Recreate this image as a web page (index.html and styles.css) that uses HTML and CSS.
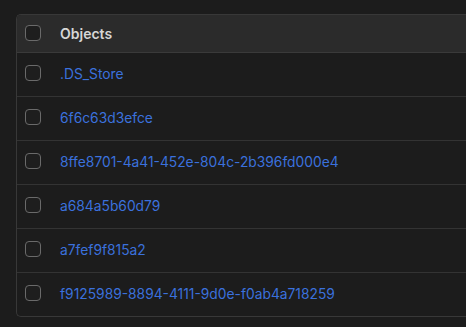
FILE: index.html
```html
<!DOCTYPE html>
<html lang="en">
<head>
    <meta charset="UTF-8">
    <meta name="viewport" content="width=device-width, initial-scale=1.0">
    <title>Objects</title>
    <link rel="stylesheet" href="styles.css">
</head>
<body>
    <div class="table-wrap">
        <table class="objects">
            <thead>
                <tr>
                    <th class="check-col"><span class="checkbox"></span></th>
                    <th>Objects</th>
                </tr>
            </thead>
            <tbody>
                <tr>
                    <td class="check-col"><span class="checkbox"></span></td>
                    <td><a href="#">.DS_Store</a></td>
                </tr>
                <tr>
                    <td class="check-col"><span class="checkbox"></span></td>
                    <td><a href="#">6f6c63d3efce</a></td>
                </tr>
                <tr>
                    <td class="check-col"><span class="checkbox"></span></td>
                    <td><a href="#">8ffe8701-4a41-452e-804c-2b396fd000e4</a></td>
                </tr>
                <tr>
                    <td class="check-col"><span class="checkbox"></span></td>
                    <td><a href="#">a684a5b60d79</a></td>
                </tr>
                <tr>
                    <td class="check-col"><span class="checkbox"></span></td>
                    <td><a href="#">a7fef9f815a2</a></td>
                </tr>
                <tr>
                    <td class="check-col"><span class="checkbox"></span></td>
                    <td><a href="#">f9125989-8894-4111-9d0e-f0ab4a718259</a></td>
                </tr>
            </tbody>
        </table>
    </div>
</body>
</html>
```

FILE: styles.css
```css
body {
    font-family: Inter, "Noto Sans", sans-serif;
    background-color: #1c1c1c;
    margin: 0;
    padding: 14px 0 0 16px;
    overflow: hidden;
}
.table-wrap {
    border: 1px solid #383838;
    border-right: none;
    border-radius: 5px 0 0 5px;
    overflow: hidden;
}
.objects {
    width: 100%;
    border-collapse: collapse;
}
.objects th,
.objects td {
    padding: 0;
    text-align: left;
    vertical-align: middle;
}
.objects thead tr {
    height: 37px;
    background-color: #2b2b2b;
    border-bottom: 1px solid #3a3a3a;
}
.objects th {
    color: #d6d6d6;
    font-size: 14px;
    font-weight: 600;
}
.objects tbody tr {
    height: 44px;
    border-bottom: 1px solid #333333;
}
.objects tbody tr:last-child {
    border-bottom: none;
}
.objects td {
    font-size: 13.8px;
}
.check-col {
    width: 35px;
    padding-left: 8px !important;
}
.checkbox {
    display: block;
    width: 14px;
    height: 14px;
    border: 1px solid #6a6a6a;
    border-radius: 4px;
    background-color: #1e1e1e;
}
.objects tbody .checkbox {
    margin-top: -3px;
}
.objects a {
    color: #3b71dd;
    text-decoration: none;
}
```
